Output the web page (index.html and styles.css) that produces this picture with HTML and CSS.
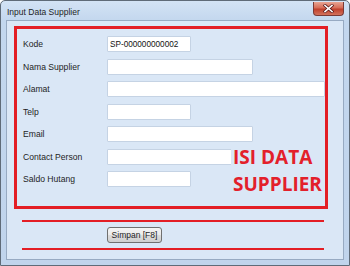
FILE: index.html
```html
<!DOCTYPE html>
<html lang="en">
<head>
    <meta charset="UTF-8">
    <title>Input Data Supplier</title>

    <link rel="stylesheet" href="styles.css">
</head>
<body>

    <div class="window">

        <div class="titlebar">
            <span class="title">Input Data Supplier</span>
            <div class="close">
                <svg width="11" height="9" viewBox="0 0 11 9">
                    <path d="M2 1.5 L9 7.5 M9 1.5 L2 7.5" stroke="#5a1a1a" stroke-width="3" stroke-linecap="square"/>
                    <path d="M2 1.5 L9 7.5 M9 1.5 L2 7.5" stroke="#ffffff" stroke-width="1.6" stroke-linecap="square"/>
                </svg>
            </div>
        </div>

        <div class="client">
            <div class="form-box">
                <div class="row">
                    <label>Kode</label>
                    <input class="field short" type="text" value="SP-000000000002">
                </div>
                <div class="row">
                    <label>Nama Supplier</label>
                    <input class="field medium" type="text">
                </div>
                <div class="row">
                    <label>Alamat</label>
                    <input class="field long" type="text">
                </div>
                <div class="row">
                    <label>Telp</label>
                    <input class="field short" type="text">
                </div>
                <div class="row">
                    <label>Email</label>
                    <input class="field medium" type="text">
                </div>
                <div class="row">
                    <label>Contact Person</label>
                    <input class="field medium" type="text">
                </div>
                <div class="row">
                    <label>Saldo Hutang</label>
                    <input class="field short" type="text">
                </div>

                <div class="note">ISI DATA<br>SUPPLIER</div>
            </div>

            <div class="rule rule-top"></div>
            <div class="actions">
                <button class="btn">Simpan [F8]</button>
            </div>
            <div class="rule"></div>
        </div>
    </div>

</body>
</html>
```

FILE: styles.css
```css
html, body{
    height: 100%;
}

body{
    margin: 0;
    overflow: hidden;
    background: #ffffff;
    font-family: "Liberation Sans", Arial, sans-serif;
}

.window{
    width: 350px;
    height: 266px;
    box-sizing: border-box;
    border: 1px solid #5f6b78;
    border-radius: 5px 5px 0 0;
    background: linear-gradient(to bottom, #d3e3f5 0px, #c3d7ee 20px, #c0d4ec 100%);
    display: flex;
    flex-direction: column;
    padding: 0 5px 5px 5px;
}

.titlebar{
    height: 19px;
    flex: 0 0 19px;
    display: flex;
    align-items: center;
    justify-content: space-between;
}

.title{
    font-size: 8.5px;
    color: #1e1e1e;
    margin-left: 1px;
    margin-top: 2px;
}

.close{
    width: 31px;
    height: 14px;
    margin-top: -4px;
    box-sizing: border-box;
    border: 1px solid #7a3a36;
    border-top: none;
    border-radius: 0 0 4px 4px;
    background: linear-gradient(to bottom, #e8a593 0%, #d66c57 45%, #c0402c 55%, #d2725c 100%);
    display: flex;
    align-items: center;
    justify-content: center;
}

.client{
    flex: 1;
    border: 1px solid #97aac2;
    background: #dae7f6;
    display: flex;
    flex-direction: column;
    padding: 5px 15px 0 7px;
}

.form-box{
    position: relative;
    border: 3px solid #e31e25;
    padding: 7px 0 19px 6px;
    display: flex;
    flex-direction: column;
    gap: 6.5px;
}

.row{
    display: flex;
    align-items: center;
    height: 16px;
}

label{
    width: 84px;
    flex: 0 0 84px;
    font-size: 8.6px;
    color: #1e1e1e;
}

.field{
    height: 16px;
    box-sizing: border-box;
    margin: 0;
    padding: 0 2px;
    border: 1px solid #c5d3e4;
    border-radius: 1px;
    background: #ffffff;
    font-family: "Liberation Sans", Arial, sans-serif;
    font-size: 8.2px;
    color: #111111;
    outline: none;
}

.short{
    width: 84px;
}

.medium{
    width: 146px;
}

.long{
    width: 219px;
}

.note{
    position: absolute;
    left: 214px;
    top: 115px;
    padding: 0 2px;
    background: #dae7f6;
    color: #e3202b;
    font-family: "Open Sans", sans-serif;
    font-weight: 700;
    font-size: 19px;
    line-height: 27px;
}

.rule{
    height: 2px;
    background: #e31e25;
    margin: 0 4px 0 8px;
}

.rule-top{
    margin-top: 11px;
}

.actions{
    display: flex;
    padding: 5px 0 5px 93px;
}

.btn{
    width: 55px;
    height: 16px;
    box-sizing: border-box;
    margin: 0;
    padding: 0;
    border: 1px solid #707070;
    border-radius: 3px;
    background: linear-gradient(to bottom, #f4f4f4 0%, #ebebeb 50%, #dddddd 51%, #cfcfcf 100%);
    font-family: "Liberation Sans", Arial, sans-serif;
    font-size: 8.5px;
    color: #1e1e1e;
}
```
